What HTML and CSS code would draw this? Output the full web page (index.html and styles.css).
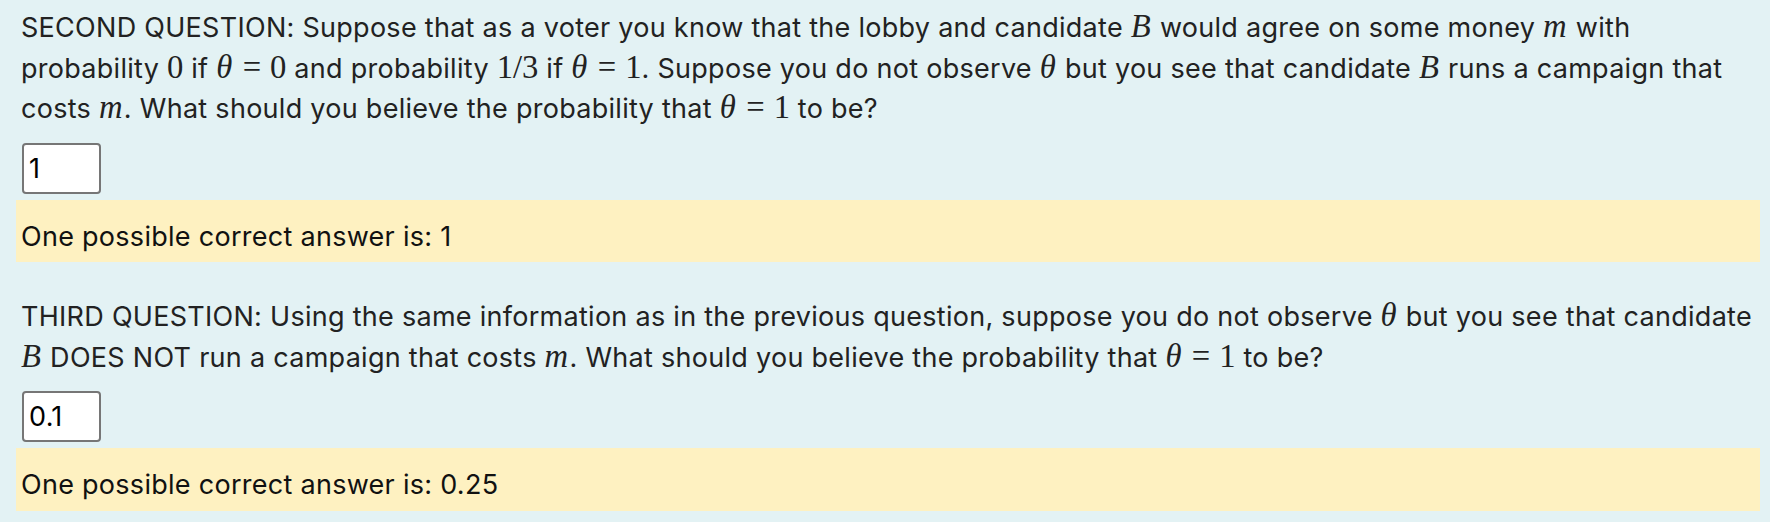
FILE: index.html
```html
<!DOCTYPE html>
<html>
<head>
<meta charset="utf-8">
<link rel="stylesheet" href="styles.css">
</head>
<body>
<div class="page">
  <section class="question">
    <p class="prompt">SECOND QUESTION: Suppose that as a voter you know that the lobby and candidate <span class="m"><i>B</i></span> would agree on some money <span class="m"><i>m</i></span> with<br>probability <span class="m">0</span> if <span class="m"><i>θ</i><span class="rel">=</span>0</span> and probability <span class="m">1/3</span> if <span class="m"><i>θ</i><span class="rel">=</span>1</span>. Suppose you do not observe <span class="m"><i>θ</i></span> but you see that candidate <span class="m"><i>B</i></span> runs a campaign that<br>costs <span class="m"><i>m</i></span>. What should you believe the probability that <span class="m"><i>θ</i><span class="rel">=</span>1</span> to be?</p>
    <div class="answer"><input class="field" type="text" value="1"></div>
    <div class="feedback">One possible correct answer is: 1</div>
  </section>
  <section class="question">
    <p class="prompt">THIRD QUESTION: Using the same information as in the previous question, suppose you do not observe <span class="m"><i>θ</i></span> but you see that candidate<br><span class="m"><i>B</i></span> DOES NOT run a campaign that costs <span class="m"><i>m</i></span>. What should you believe the probability that <span class="m"><i>θ</i><span class="rel">=</span>1</span> to be?</p>
    <div class="answer"><input class="field" type="text" value="0.1"></div>
    <div class="feedback">One possible correct answer is: 0.25</div>
  </section>
</div>
</body>
</html>
```
FILE: styles.css
```css
html, body {
  margin: 0;
  padding: 0;
  background: #e3f2f4;
}
body {
  font-family: Inter, "Noto Sans", sans-serif;
  font-size: 27px;
  line-height: 1.5;
  letter-spacing: 0.28px;
  color: #222222;
}
.page {
  padding: 8px 10px 10px 16px;
}
.question + .question {
  margin-top: 35px;
}
.prompt {
  margin: 0;
  padding: 0 5px;
  white-space: nowrap;
}
.m {
  font-family: "Liberation Serif", "DejaVu Serif", serif;
  font-size: 1.21em;
  line-height: 1;
  letter-spacing: 0;
  white-space: nowrap;
}
.m i {
  font-style: italic;
  padding-right: 0.04em;
}
.rel {
  margin: 0 0.2778em;
}
.answer {
  margin-top: 13px;
  padding-left: 6px;
  display: flex;
}
.field {
  width: 79px;
  height: 51px;
  box-sizing: border-box;
  border: 2px solid #767676;
  border-radius: 4px;
  background: #fff;
  font-family: Inter, "Noto Sans", sans-serif;
  font-size: 27px;
  letter-spacing: 0.28px;
  color: #000;
  padding: 0 5px;
  margin: 0;
}
.feedback {
  margin-top: 6px;
  background: #fef1c1;
  color: #111;
  padding: 17px 5px 5px;
}
```
